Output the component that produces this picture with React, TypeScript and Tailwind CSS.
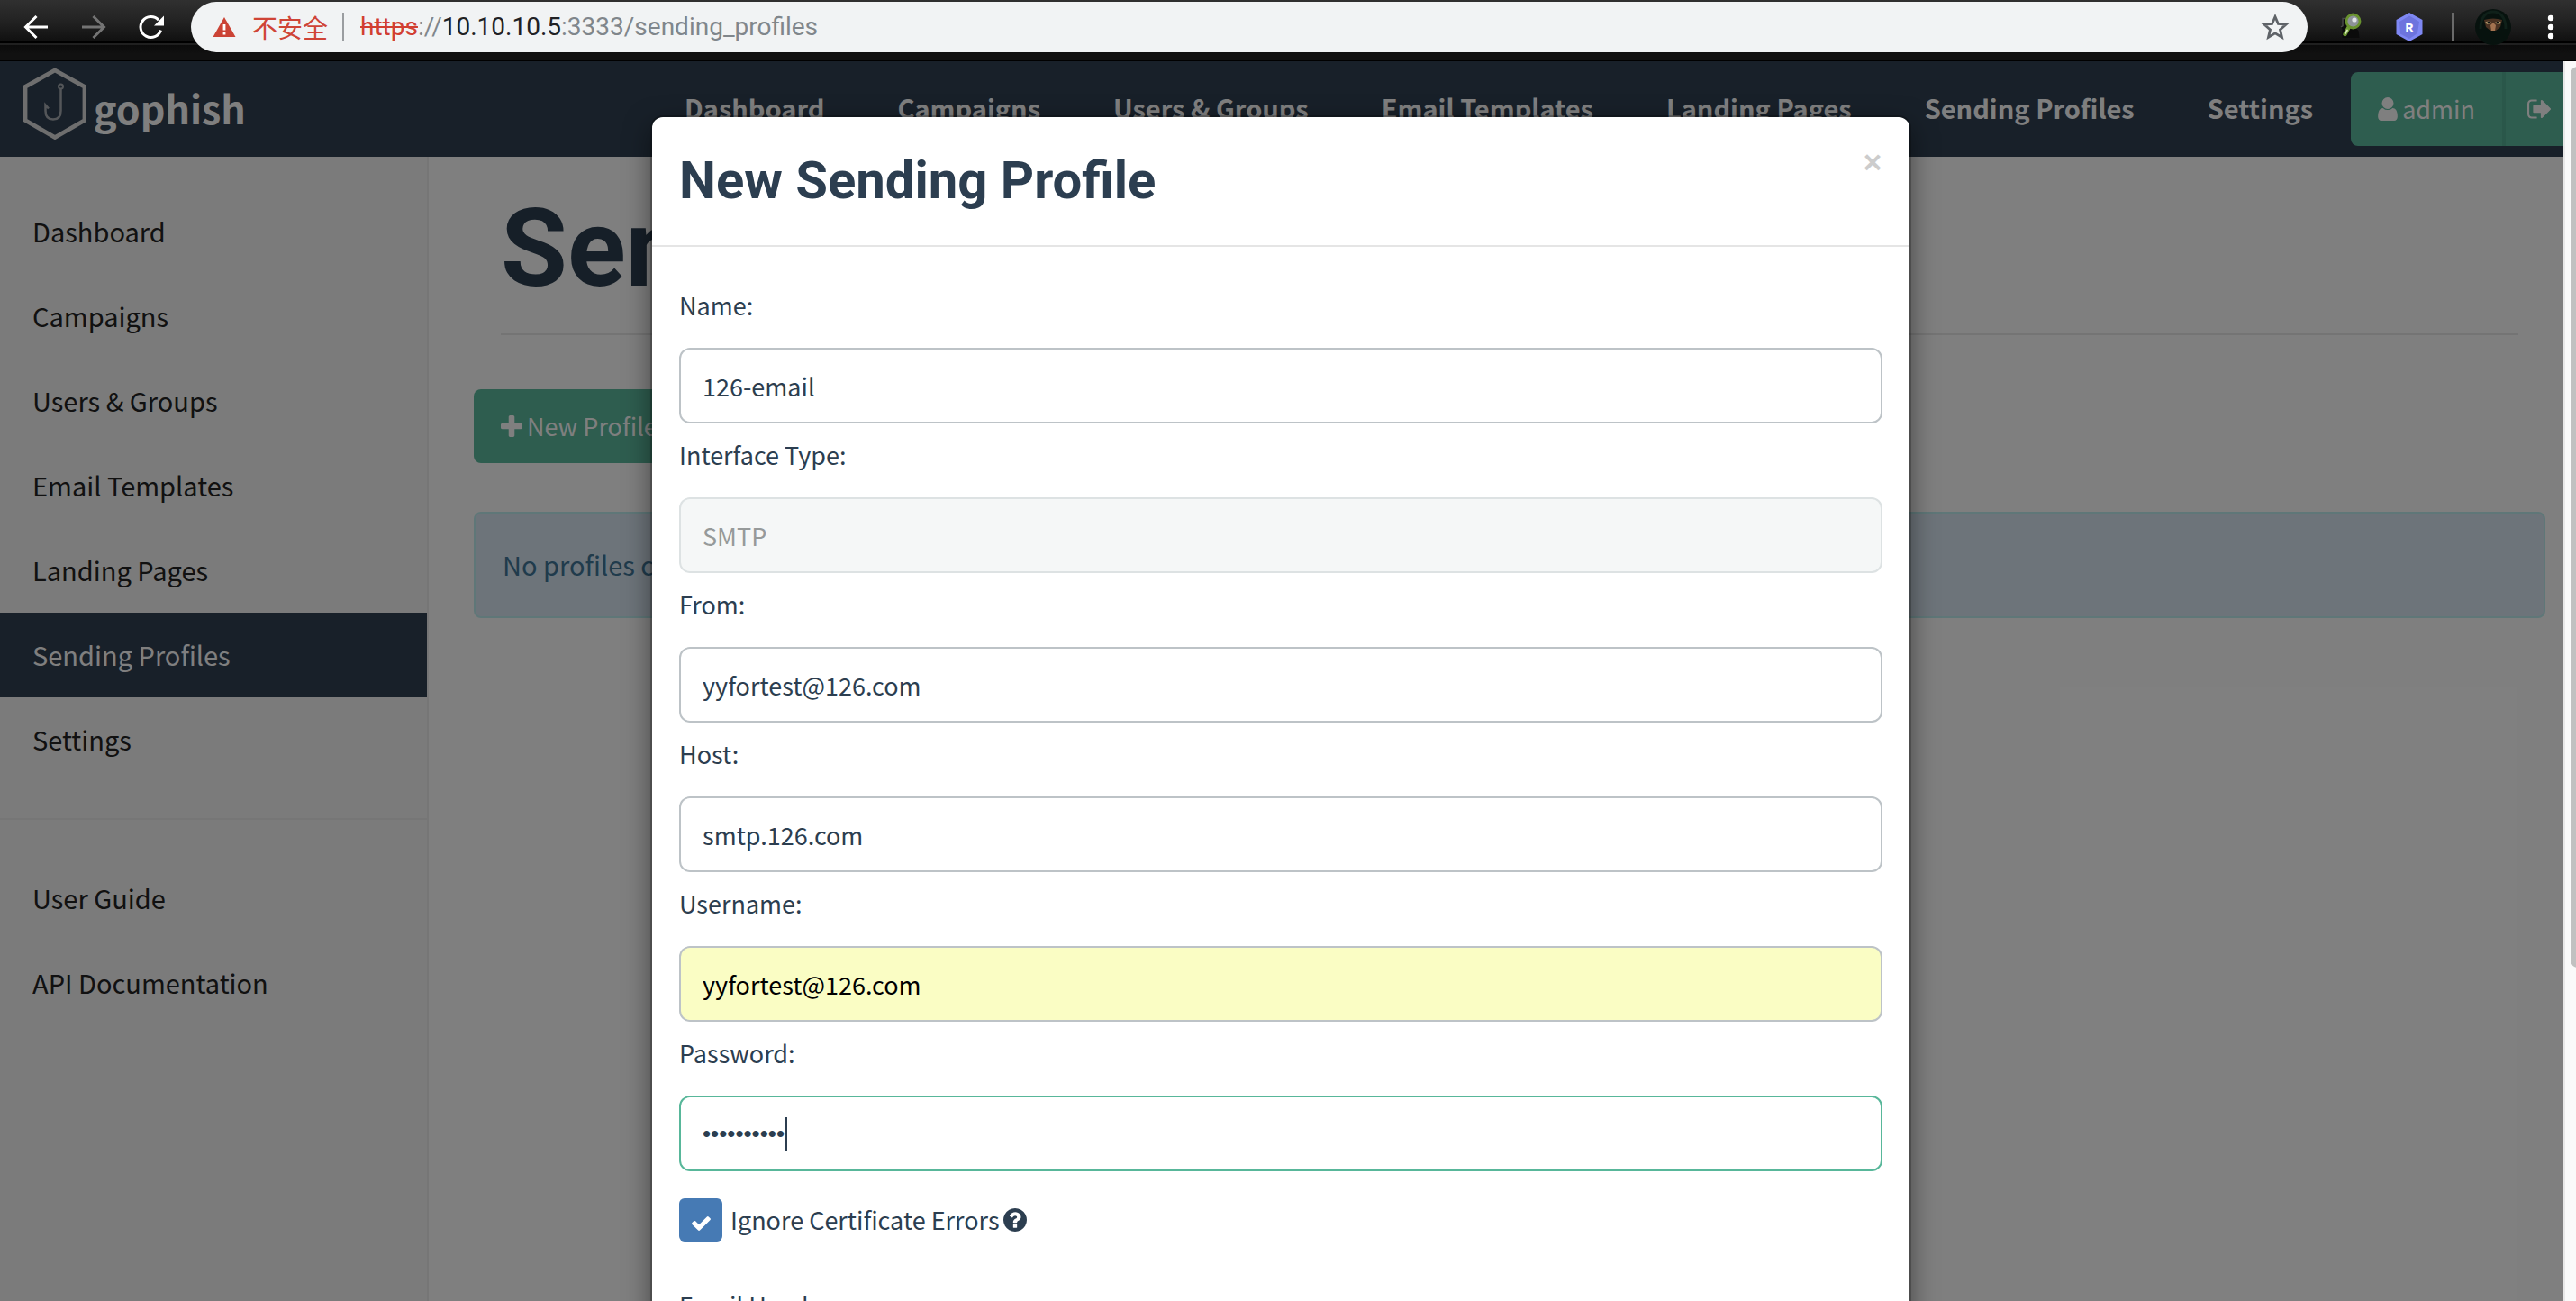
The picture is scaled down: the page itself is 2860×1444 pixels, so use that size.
import React from "react";

const navLinks = ["Dashboard", "Campaigns", "Users & Groups", "Email Templates", "Landing Pages", "Sending Profiles", "Settings"];
const docLinks = ["User Guide", "API Documentation"];

function Glyph({ d, box, className }: { d: string; box: string; className: string }) {
  return (
    <svg className={className} viewBox={box} fill="currentColor" aria-hidden="true">
      <path d={d} />
    </svg>
  );
}

const userPath =
  "M1280 1399q0 109-62.500 187t-150.500 78h-854q-88 0-150.500-78t-62.500-187q0-85 8.500-160.500t31.500-152 58.500-131 94-89 134.500-34.500q131 128 313 128t313-128q76 0 134.500 34.500t94 89 58.500 131 31.500 152 8.500 160.500zM1024 512q0 159-112.500 271.500t-271.500 112.500-271.500-112.500-112.500-271.500 112.500-271.500 271.500-112.500 271.500 112.500 112.500 271.500z";
const signOutPath =
  "M640 1440q0 4 1 20t.5 26.500-3 23.500-10 19.500-20.500 6.500h-320q-119 0-203.500-84.500t-84.500-203.500v-704q0-119 84.500-203.500t203.500-84.500h320q13 0 22.500 9.500t9.500 22.500q0 4 1 20t.5 26.500-3 23.500-10 19.500-20.500 6.500h-320q-66 0-113 47t-47 113v704q0 66 47 113t113 47h312l11.500 1 11.500 3 8 5.500 7 9 2 13.500zm928-544q0 26-19 45l-544 544q-19 19-45 19t-45-19-19-45v-288h-448q-26 0-45-19t-19-45v-384q0-26 19-45t45-19h448v-288q0-26 19-45t45-19 45 19l544 544q19 19 19 45z";
const plusPath =
  "M1600 736v192q0 40-28 68t-68 28h-416v416q0 40-28 68t-68 28h-192q-40 0-68-28t-28-68v-416h-416q-40 0-68-28t-28-68v-192q0-40 28-68t68-28h416v-416q0-40 28-68t68-28h192q40 0 68 28t28 68v416h416q40 0 68 28t28 68z";
const questionPath =
  "M1024 1376v-192q0-14-9-23t-23-9h-192q-14 0-23 9t-9 23v192q0 14 9 23t23 9h192q14 0 23-9t9-23zm256-672q0-88-55.500-163t-138.500-116-170-41q-243 0-371 213-15 24 8 42l132 100q7 6 19 6 16 0 25-12 53-68 86-92 34-24 86-24 48 0 85.500 26t37.500 59q0 38-20 61t-68 45q-63 28-115.500 86.500t-52.500 125.500v36q0 14 9 23t23 9h192q14 0 23-9t9-23q0-19 21.500-49.500t54.500-49.500q32-18 49-28.500t46-35 44.500-48 28-60.500 12.500-81zm384 192q0 209-103 385.500t-279.500 279.500-385.500 103-385.500-103-279.500-279.500-103-385.500 103-385.500 279.500-279.500 385.500-103 385.500 103 279.500 279.500 103 385.500z";
const checkPath =
  "M1671 566q0 40-28 68l-724 724-136 136q-28 28-68 28t-68-28l-136-136-362-362q-28-28-28-68t28-68l136-136q28-28 68-28t68 28l294 295 656-657q28-28 68-28t68 28l136 136q28 28 28 68z";

function BrowserBar() {
  return (
    <div className="flex h-[68px] shrink-0 items-start bg-[linear-gradient(to_bottom,#303030_0px,#222_24px,#101010_46px,#000_46px,#000_48px,#202020_48px,#202020_50px,#0b0b0b_50px,#111_60px,#111_67px,#000_67px)] pt-[2px] font-[Roboto,sans-serif]">
      <div className="flex h-14 w-[212px] shrink-0 items-center gap-8 pl-6 text-white">
        <button aria-label="Back" className="size-8">
          <svg viewBox="0 0 32 32" fill="none" stroke="currentColor" strokeWidth="3"><path d="M29 16H5M16.500 4L4.500 16l12 12" /></svg>
        </button>
        <button aria-label="Forward" className="size-8 text-[#747474]">
          <svg viewBox="0 0 32 32" fill="none" stroke="currentColor" strokeWidth="3"><path d="M3 16h24M15.500 4l12 12-12 12" /></svg>
        </button>
        <button aria-label="Reload" className="size-8">
          <svg viewBox="0 0 32 32"><path d="M26.500 19.500A11.500 11.500 0 1 1 24 8.200" fill="none" stroke="currentColor" strokeWidth="3" /><path d="M30 3.500v11H19z" fill="currentColor" /></svg>
        </button>
      </div>
      <div className="flex h-14 min-w-0 flex-1 items-center rounded-full bg-[#f1f3f4] pr-5 pl-6">
        <svg className="size-[26px] shrink-0" viewBox="0 0 26 26" aria-hidden="true">
          <path d="M13 2L25.500 24H.5z" fill="#cb4335" />
          <path d="M13 10v6.500M13 18.500v3" stroke="#fff" strokeWidth="2.800" />
        </svg>
        <span className="ml-[18px] font-['Noto_Sans_CJK_SC',sans-serif] text-[28px] leading-none text-[#cf4436]">不安全</span>
        <span className="mr-[18px] ml-4 h-8 w-[2px] bg-[#9a9da0]" />
        <span className="text-[28px] leading-none whitespace-nowrap text-[#80868b]">
          <span className="text-[#d23f31] line-through">https</span>://<span className="text-[#202124]">10.10.10.5</span>:3333/sending_profiles
        </span>
        <button aria-label="Bookmark" className="ml-auto size-8">
          <svg viewBox="0 0 32 32" fill="none" stroke="#5f6368" strokeWidth="2.800"><path d="M16 4.500l3.400 8 8.600.7-6.500 5.700 2 8.500L16 22.900l-7.500 4.500 2-8.500L4 13.200l8.600-.7z" /></svg>
        </button>
      </div>
      <div className="flex h-14 w-[298px] shrink-0 items-center pl-8">
        <button aria-label="Search extension" className="size-8">
          <svg viewBox="0 0 32 32">
            <path d="M9 6H6.500v8L4.500 16l2 2v10h19l-1-8-5-5z" fill="#0b0b0b" />
            <path d="M9 6.500H7v8L5 16" stroke="#4a4a4a" strokeWidth="1.500" fill="none" />
            <path d="M13.500 16.500L9.500 24" stroke="#6f9a35" strokeWidth="4.500" strokeLinecap="round" />
            <path d="M12 19.500L10 23" stroke="#dcebc0" strokeWidth="1.800" strokeLinecap="round" />
            <circle cx="18.500" cy="9.500" r="7.500" fill="#8d9299" stroke="#69922f" strokeWidth="2.800" />
            <circle cx="20" cy="8" r="2.600" fill="#dfe2e6" />
          </svg>
        </button>
        <button aria-label="Extension R" className="ml-8 size-9">
          <svg viewBox="0 0 36 36">
            <path d="M17 2l14.500 8v16L17 34 2.500 26V10z" fill="#7f88f4" />
            <path d="M17 5.500l11 6.500-2 13-9 6-10-5.500L6 12z" fill="#6d74de" />
            <text x="17" y="23.500" textAnchor="middle" fontSize="15" fontWeight="700" fontFamily="Open Sans, sans-serif" fill="#fff">R</text>
          </svg>
        </button>
        <span className="ml-7 h-8 w-[2px] bg-[#6a6a6a]" />
        <button aria-label="Account" className="ml-6 size-10">
          <svg viewBox="0 0 40 40">
            <circle cx="20" cy="20" r="20" fill="#07120e" />
            <path d="M6 22C6 8 13 3 20 3s14 5 14 19" fill="none" stroke="#0f2019" strokeWidth="3" />
            <path d="M10 12q10-3 20 0l-2 8-5 4h-6l-5-4z" fill="#4a3222" />
            <path d="M17 18l3-3 3 3-1 6h-4z" fill="#a37350" />
            <path d="M11 15q4-3 7 0-3 4-7 0zM22 15q4-3 7 0-3 4-7 0z" fill="#c9b27c" />
            <circle cx="15" cy="15" r="1.600" fill="#111" />
            <circle cx="25" cy="15" r="1.600" fill="#111" />
          </svg>
        </button>
        <button aria-label="Menu" className="ml-10 size-8 text-white">
          <svg viewBox="0 0 32 32" fill="currentColor"><circle cx="4" cy="6" r="3.200" /><circle cx="4" cy="16" r="3.200" /><circle cx="4" cy="26" r="3.200" /></svg>
        </button>
      </div>
    </div>
  );
}

function NavBar() {
  return (
    <header className="flex h-[106px] items-center bg-[#304052] pl-[26px] whitespace-nowrap text-white">
      <a href="#" className="flex items-center gap-2">
        <svg className="mb-3 h-20 w-[70px]" viewBox="0 0 70 80" fill="none" aria-hidden="true">
          <path d="M35 3l33 18.500v37L35 77.500 2 58.500v-37z" stroke="#dcdcdc" strokeWidth="4.800" />
          <g stroke="#a8adb2">
            <circle cx="41.500" cy="21" r="2.500" strokeWidth="2" />
            <path d="M41.500 24v24c0 6-3 9.500-8.500 9.500S24.500 54 24.500 48v-6.500l3.500 4" strokeWidth="2.500" />
          </g>
        </svg>
        <span className="mb-1 text-[43px] leading-none font-bold">gophish</span>
      </a>
      <nav className="mb-[2px] ml-auto flex gap-[81px] text-[29px] font-bold">
        {navLinks.map((n) => (
          <a key={n} href="#">{n}</a>
        ))}
      </nav>
      <div className="ml-[42px] flex h-[82px] overflow-hidden rounded-l-lg bg-[#5cba9e]">
        <button className="flex items-center gap-[5px] border-r-4 border-[#54af94] px-[30px]">
          <Glyph d={userPath} box="0 128 1280 1536" className="h-[26px] w-[22px]" />
          <span>admin</span>
        </button>
        <button aria-label="Sign out" className="pr-[14px] pl-6">
          <Glyph d={signOutPath} box="0 256 1568 1280" className="h-[22px] w-[26px]" />
        </button>
      </div>
    </header>
  );
}

function SideLink({ name, active = false }: { name: string; active?: boolean }) {
  return (
    <a href="#" className={active ? "block bg-[#304052] px-9 pb-[2px] leading-[92px] text-white" : "block px-9 pb-[2px] leading-[92px] text-[#222]"}>
      {name}
    </a>
  );
}

function Field({ label, value, type = "text", tone, disabled = false, caret = false }: { label: string; value: string; type?: string; tone?: string; disabled?: boolean; caret?: boolean }) {
  const id = label.toLowerCase().replace(/\W/g, "");
  return (
    <div>
      <label htmlFor={id} className="mb-3 block leading-[70px]">{label}</label>
      <div className="relative">
        <input
          id={id}
          type={type}
          defaultValue={value}
          disabled={disabled}
          className={"block h-[84px] w-full rounded-xl border-2 px-6 outline-none " + (tone ?? "border-[#bdc3c7] bg-white text-[#2c3e50]")}
        />
        {caret && <span className="absolute top-6 left-[118px] h-[38px] w-[2px] bg-[#2c3e50]" />}
      </div>
    </div>
  );
}

function Dialog() {
  return (
    <div role="dialog" aria-labelledby="dialog-title" className="mx-auto w-full max-w-[1396px] rounded-xl bg-white shadow-[0_0_0_2px_rgba(0,0,0,0.2),0_10px_30px_rgba(0,0,0,0.5)]">
      <div className="flex items-start justify-between border-b-2 border-[#e5e5e5] px-[30px] pt-[38px] pb-10">
        <h4 id="dialog-title" className="font-[Roboto,sans-serif] text-[58px] leading-[64px] font-bold">New Sending Profile</h4>
        <button aria-label="Close" className="font-[Lato,sans-serif] text-[38px] leading-5 font-black text-[#ccc]">×</button>
      </div>
      <form className="px-[30px] pt-[30px]">
        <Field label="Name:" value="126-email" />
        <Field label="Interface Type:" value="SMTP" disabled tone="border-[#dde2e3] bg-[#f5f7f7] text-[#969a9a]" />
        <Field label="From:" value="yyfortest@126.com" />
        <Field label="Host:" value="smtp.126.com" />
        <Field label="Username:" value="yyfortest@126.com" tone="border-[#bdc3c7] bg-[#fafdc4] text-black" />
        <Field label="Password:" value="password12" type="password" caret tone="border-[#58b79a] bg-white font-['Liberation_Sans',sans-serif] text-[26px] text-[#2c3e50]" />
        <label className="mt-[30px] mb-9 flex h-12 items-center">
          <span className="relative mr-[9px] size-12">
            <input type="checkbox" defaultChecked className="block size-12 appearance-none rounded-md bg-[#467ab4]" />
            <Glyph d={checkPath} box="121 334 1550 1188" className="pointer-events-none absolute top-5 left-[14px] h-4 w-[21px] text-white" />
          </span>
          Ignore Certificate Errors
          <Glyph d={questionPath} box="128 128 1536 1536" className="ml-1 size-[26px]" />
        </label>
        <h5 className="leading-[70px]">Email Headers:</h5>
      </form>
    </div>
  );
}

export default function App() {
  return (
    <div className="flex h-screen flex-col overflow-hidden bg-white font-['Noto_Sans_CJK_SC',sans-serif] text-[27px] text-[#2c3e50]">
      <BrowserBar />
      <div className="flex min-h-0 flex-1">
        <div className="relative flex min-w-0 flex-1 flex-col overflow-hidden">
          <NavBar />
          <div className="flex min-h-0 flex-1">
            <aside className="w-[476px] shrink-0 border-r-2 border-[#ededed] bg-[#f6f6f6] pt-9 text-[29px]">
              {navLinks.map((n) => (
                <SideLink key={n} name={n} active={n === "Sending Profiles"} />
              ))}
              <hr className="my-10 border-t-2 border-[#ededed]" />
              {docLinks.map((n) => (
                <SideLink key={n} name={n} />
              ))}
            </aside>
            <main className="min-w-0 flex-1 pr-5 pl-[50px]">
              <h1 className="mx-[30px] mb-[60px] border-b-2 border-[#e8e8e8] pt-8 pb-6 font-[Roboto,sans-serif] text-[120px] leading-[140px] font-bold">Sending Profiles</h1>
              <button className="flex h-[82px] items-center gap-[5px] rounded-lg bg-[#5cba9e] px-[30px] text-white">
                <Glyph d={plusPath} box="192 128 1408 1408" className="size-6" />
                New Profile
              </button>
              <div className="mt-[54px] rounded-lg border-2 border-[#beeef0] bg-[#dae8f5] px-[30px] pb-[2px] text-[29px] leading-[112px] text-[#407698]">
                No profiles created yet. Let's create one!
              </div>
            </main>
          </div>
          <div className="absolute inset-0 bg-black/50 pt-[62px] pr-[2px]">
            <Dialog />
          </div>
        </div>
        <div className="w-[14px] shrink-0 overflow-hidden border-l-2 border-[#e8e8e8] bg-[#fafafa] pt-[6px] pl-[6px]">
          <div className="h-[73%] w-4 rounded-full bg-[#c1c1c1]" />
        </div>
      </div>
    </div>
  );
}
